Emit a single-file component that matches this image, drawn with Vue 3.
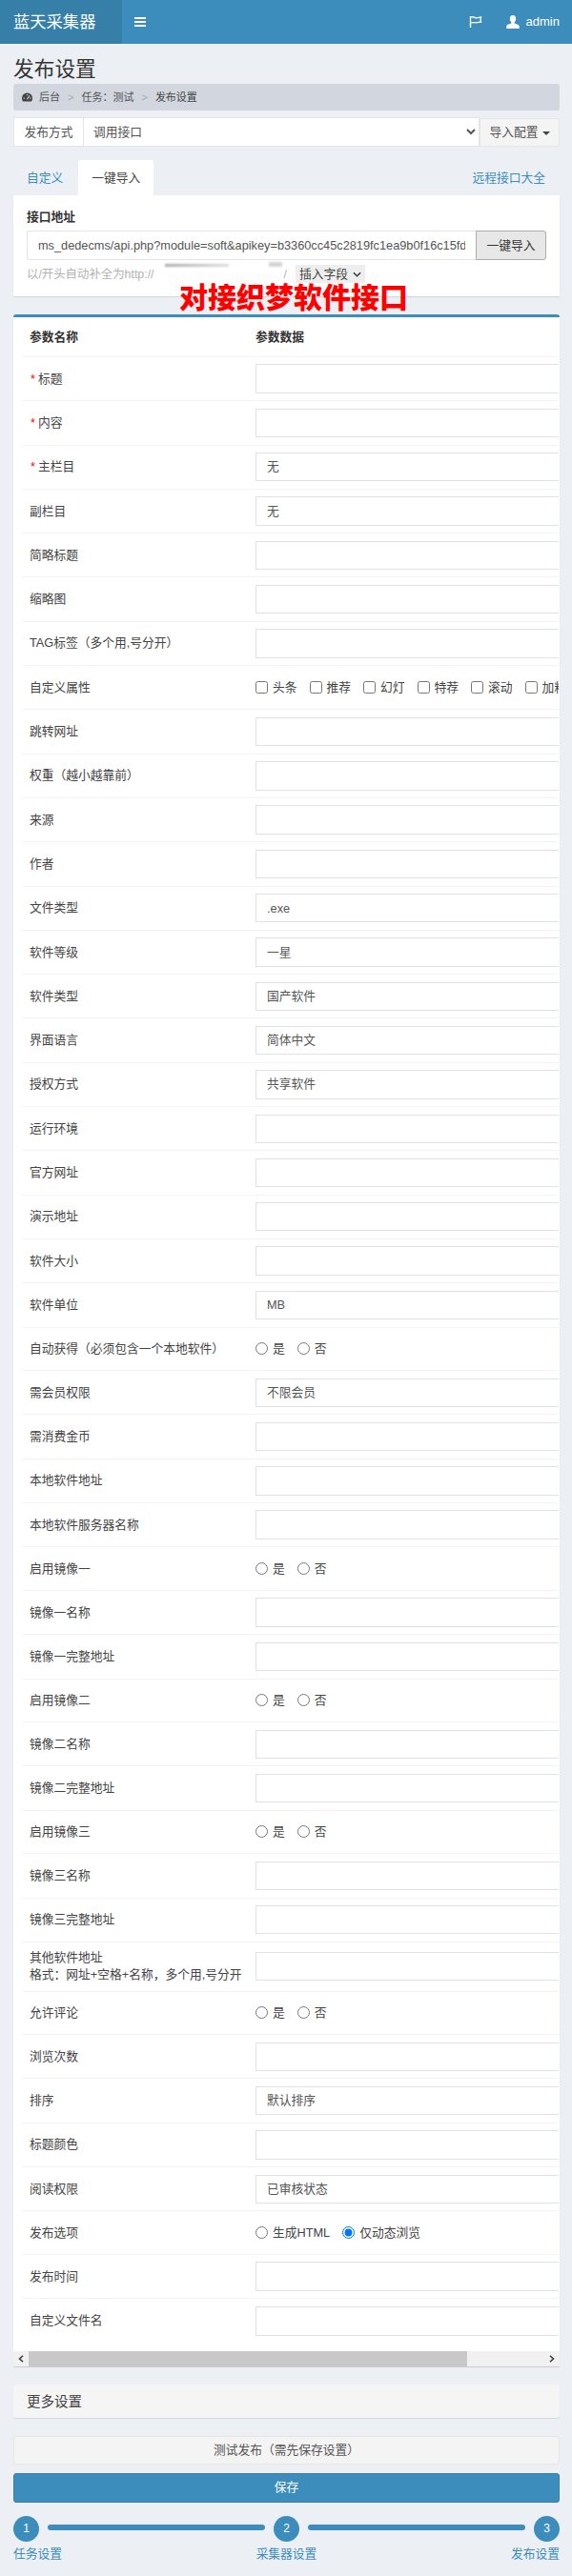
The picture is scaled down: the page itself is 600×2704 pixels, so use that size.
<script setup>
import { ref } from 'vue';

const apiUrl = ref('ms_dedecms/api.php?module=soft&apikey=b3360cc45c2819fc1ea9b0f16c15fd');

const filas = [
  { nombre: '标题', tipo: 'input', requerido: true },
  { nombre: '内容', tipo: 'input', requerido: true },
  { nombre: '主栏目', tipo: 'select', valor: '无', requerido: true },
  { nombre: '副栏目', tipo: 'select', valor: '无' },
  { nombre: '简略标题', tipo: 'input' },
  { nombre: '缩略图', tipo: 'input' },
  { nombre: 'TAG标签（多个用,号分开）', tipo: 'input' },
  { nombre: '自定义属性', tipo: 'check' },
  { nombre: '跳转网址', tipo: 'input' },
  { nombre: '权重（越小越靠前）', tipo: 'input' },
  { nombre: '来源', tipo: 'input' },
  { nombre: '作者', tipo: 'input' },
  { nombre: '文件类型', tipo: 'input', valor: '.exe' },
  { nombre: '软件等级', tipo: 'select', valor: '一星' },
  { nombre: '软件类型', tipo: 'select', valor: '国产软件' },
  { nombre: '界面语言', tipo: 'select', valor: '简体中文' },
  { nombre: '授权方式', tipo: 'select', valor: '共享软件' },
  { nombre: '运行环境', tipo: 'input' },
  { nombre: '官方网址', tipo: 'input' },
  { nombre: '演示地址', tipo: 'input' },
  { nombre: '软件大小', tipo: 'input' },
  { nombre: '软件单位', tipo: 'select', valor: 'MB' },
  { nombre: '自动获得（必须包含一个本地软件）', tipo: 'radio' },
  { nombre: '需会员权限', tipo: 'select', valor: '不限会员' },
  { nombre: '需消费金币', tipo: 'input' },
  { nombre: '本地软件地址', tipo: 'input' },
  { nombre: '本地软件服务器名称', tipo: 'input' },
  { nombre: '启用镜像一', tipo: 'radio' },
  { nombre: '镜像一名称', tipo: 'input' },
  { nombre: '镜像一完整地址', tipo: 'input' },
  { nombre: '启用镜像二', tipo: 'radio' },
  { nombre: '镜像二名称', tipo: 'input' },
  { nombre: '镜像二完整地址', tipo: 'input' },
  { nombre: '启用镜像三', tipo: 'radio' },
  { nombre: '镜像三名称', tipo: 'input' },
  { nombre: '镜像三完整地址', tipo: 'input' },
  { nombre: '其他软件地址', nota: '格式：网址+空格+名称，多个用,号分开', tipo: 'input', doble: true },
  { nombre: '允许评论', tipo: 'radio' },
  { nombre: '浏览次数', tipo: 'input' },
  { nombre: '排序', tipo: 'select', valor: '默认排序' },
  { nombre: '标题颜色', tipo: 'input' },
  { nombre: '阅读权限', tipo: 'select', valor: '已审核状态' },
  { nombre: '发布选项', tipo: 'radio', opciones: ['生成HTML', '仅动态浏览'], marcado: 1 },
  { nombre: '发布时间', tipo: 'input' },
  { nombre: '自定义文件名', tipo: 'input' },
];

const atributos = ['头条', '推荐', '幻灯', '特荐', '滚动', '加粗'];
</script>

<template>
  <div class="page">
    <header class="navbar">
      <div class="logo">蓝天采集器</div>
      <svg class="menu-icon" viewBox="0 0 12 10" width="12" height="10">
        <path d="M0 0h12v2H0zM0 4h12v2H0zM0 8h12v2H0z" fill="#fff" />
      </svg>
      <div class="nav-right">
        <svg class="flag-icon" viewBox="0 0 14 14" width="14" height="14">
          <path d="M1.5 1v12" stroke="#fff" stroke-width="1.4" fill="none" />
          <path d="M2 2c3-1 4 1 6 .8 2 0 3-.8 4.5-.8-.8 1.5-.8 3 0 5-2 0-3 .8-5 .8S4 7 2 8" stroke="#fff" stroke-width="1.3" fill="none" />
        </svg>
        <span class="user">
          <svg viewBox="0 0 14 14" width="14" height="14">
            <path d="M7 0c2 0 3.2 1.5 3.2 3.6 0 1.6-.7 3-1.500 3.700v1.200c1.800.6 5 1.400 5 3.200V14H.3v-2.300c0-1.800 3.200-2.600 5-3.200V7.300C4.500 6.600 3.800 5.200 3.800 3.600 3.800 1.500 5 0 7 0z" fill="#fff" />
          </svg>
          admin
        </span>
      </div>
    </header>

    <main class="content">
      <h1 class="title">发布设置</h1>

      <nav class="crumbs">
        <svg viewBox="0 0 12 10" width="11" height="10">
          <path d="M6 0a6 6 0 0 0-6 6c0 1.5.5 3 1.300 4h9.400C11.500 9 12 7.500 12 6a6 6 0 0 0-6-6z" fill="#444" />
          <path d="M6 7.500 8.500 3" stroke="#d2d6de" stroke-width="1.2" />
          <circle cx="2.5" cy="6" r=".8" fill="#d2d6de" />
          <circle cx="6" cy="2.4" r=".8" fill="#d2d6de" />
          <circle cx="9.6" cy="6" r=".8" fill="#d2d6de" />
        </svg>
        <span class="crumb-first">后台</span>
        <span class="sep">&gt;</span>
        <span>任务：测试</span>
        <span class="sep">&gt;</span>
        <span class="crumb-last">发布设置</span>
      </nav>

      <div class="method">
        <span class="method-addon">发布方式</span>
        <select class="method-select"><option>调用接口</option></select>
        <button class="method-btn" type="button">导入配置<i class="caret"></i></button>
      </div>

      <div class="tabs">
        <a class="tab">自定义</a>
        <a class="tab active">一键导入</a>
        <a class="tab tab-right">远程接口大全</a>
      </div>

      <section class="api-card">
        <label class="api-label">接口地址</label>
        <div class="api-group">
          <input v-model="apiUrl" class="api-input" type="text" />
          <button class="api-btn" type="button">一键导入</button>
        </div>
        <div class="help">
          <span class="help-text">以/开头自动补全为http://</span>
          <span class="help-hidden"></span>
          <span class="help-text">/</span>
          <i class="smudge smudge-a"></i>
          <i class="smudge smudge-b"></i>
          <button class="insert-btn" type="button">
            插入字段
            <svg viewBox="0 0 10 6" width="9" height="6">
              <path d="M1 1l4 4 4-4" stroke="#333" stroke-width="1.5" fill="none" />
            </svg>
          </button>
        </div>
        <div class="red-note">对接织梦软件接口</div>
      </section>

      <section class="table-card">
        <div class="table-clip">
          <div class="table-inner">
            <div class="row row-head">
              <div class="cell-name">参数名称</div>
              <div class="cell-data">参数数据</div>
            </div>
            <div
              v-for="fila in filas"
              :key="fila.nombre"
              :class="['row', { 'row-radio': fila.tipo === 'radio', 'row-double': fila.doble }]"
            >
              <div class="cell-name">
                <span v-if="fila.requerido" class="star">*</span>{{ fila.nombre }}
                <template v-if="fila.nota"><br />{{ fila.nota }}</template>
              </div>
              <div class="cell-data">
                <input v-if="fila.tipo === 'input'" class="control" type="text" :value="fila.valor" />
                <select v-else-if="fila.tipo === 'select'" class="control">
                  <option>{{ fila.valor }}</option>
                </select>
                <div v-else-if="fila.tipo === 'check'" class="options options-check">
                  <label v-for="a in atributos" :key="a" class="opt">
                    <input type="checkbox" />{{ a }}
                  </label>
                </div>
                <div v-else class="options">
                  <label v-for="(o, i) in fila.opciones || ['是', '否']" :key="o" class="opt">
                    <input type="radio" :name="fila.nombre" :checked="fila.marcado === i" />{{ o }}
                  </label>
                </div>
              </div>
            </div>
          </div>
        </div>
        <div class="scrollbar">
          <span class="scroll-arrow">
            <svg viewBox="0 0 6 8" width="6" height="8"><path d="M5 .8 1.5 4 5 7.2" stroke="#444" stroke-width="1.6" fill="none" /></svg>
          </span>
          <span class="scroll-thumb"></span>
          <span class="scroll-track"></span>
          <span class="scroll-arrow">
            <svg viewBox="0 0 6 8" width="6" height="8"><path d="M1 .8 4.5 4 1 7.2" stroke="#444" stroke-width="1.6" fill="none" /></svg>
          </span>
        </div>
      </section>

      <div class="more">更多设置</div>

      <button class="btn-test" type="button">测试发布（需先保存设置）</button>
      <button class="btn-save" type="button">保存</button>

      <div class="steps">
        <span class="step-dot">1</span>
        <span class="step-line"></span>
        <span class="step-dot">2</span>
        <span class="step-line"></span>
        <span class="step-dot">3</span>
      </div>
      <div class="step-labels">
        <a>任务设置</a>
        <a>采集器设置</a>
        <a>发布设置</a>
      </div>
    </main>
  </div>
</template>

<style>
html, body {
  margin: 0;
  background: #ecf0f5;
}
</style>

<style scoped>
.page {
  min-height: 2704px;
  background: #ecf0f5;
  font-family: "Liberation Sans", "Noto Sans CJK SC", sans-serif;
  font-size: 12.75px;
  line-height: 18px;
  color: #444;
}

.navbar {
  display: flex;
  align-items: center;
  height: 46px;
  background: #3c8dbc;
  color: #fff;
}

.logo {
  width: 128px;
  height: 46px;
  padding-left: 14px;
  box-sizing: border-box;
  background: #367fa9;
  font-size: 17.3px;
  line-height: 46px;
}

.menu-icon {
  margin-left: 13px;
}

.nav-right {
  display: flex;
  align-items: center;
  margin-left: auto;
  padding-right: 13px;
}

.flag-icon {
  margin-right: 25px;
}

.user {
  display: flex;
  align-items: center;
  gap: 7px;
  font-size: 13px;
}

.content {
  padding: 15px 13px 0 14px;
  position: relative;
}

.title {
  margin: 0 0 3px;
  font-size: 21.7px;
  line-height: 24px;
  font-weight: 400;
  color: #333;
}

.crumbs {
  display: flex;
  align-items: center;
  height: 28px;
  padding-left: 9px;
  border-radius: 3px;
  background: #d2d6de;
  font-size: 11px;
  color: #555;
}

.crumb-first {
  margin-left: 7px;
}

.sep {
  margin: 0 8px;
  color: #aaa;
}

.crumb-last {
  color: #444;
}

.method {
  display: flex;
  height: 31px;
  margin-top: 7px;
}

.method-addon {
  width: 74px;
  box-sizing: border-box;
  border: 1px solid #e1e4ea;
  background: #fff;
  text-align: center;
  line-height: 29px;
  color: #555;
}

.method-select {
  width: 415px;
  box-sizing: border-box;
  border: 1px solid #e1e4ea;
  border-left: 0;
  padding: 0 6px;
  background: #fff;
  font: inherit;
  color: #555;
  outline: none;
}

.method-btn {
  flex: 1;
  box-sizing: border-box;
  margin: 1px 0 0;
  border: 1px solid #e6e6e6;
  border-radius: 0 3px 3px 0;
  background: #f4f4f4;
  font: inherit;
  color: #555;
}

.caret {
  display: inline-block;
  margin-left: 4px;
  vertical-align: middle;
  border-top: 4px solid #444;
  border-left: 4px solid transparent;
  border-right: 4px solid transparent;
}

.tabs {
  display: flex;
  height: 37px;
  margin-top: 14px;
  box-sizing: border-box;
}

.tab {
  padding: 0 14px;
  line-height: 37px;
  color: #3c8dbc;
}

.tab.active {
  margin-left: 2px;
  border-radius: 3px 3px 0 0;
  background: #fff;
  color: #444;
}

.tab-right {
  margin-left: auto;
  padding-right: 15px;
}

.api-card {
  position: relative;
  padding: 14px;
  background: #fff;
  box-shadow: 0 1px 1px rgba(0, 0, 0, 0.1);
}

.api-label {
  display: block;
  font-weight: 700;
  color: #333;
}

.api-group {
  display: flex;
  height: 31px;
  margin-top: 5px;
}

.api-input {
  flex: 1;
  min-width: 0;
  box-sizing: border-box;
  border: 1px solid #e1e4ea;
  border-right: 0;
  border-radius: 3px 0 0 3px;
  padding: 0 11px;
  font: inherit;
  color: #555;
  outline: none;
}

.api-btn {
  width: 74px;
  border: 1px solid #adadad;
  border-radius: 0 3px 3px 0;
  background: #e7e7e7;
  font: inherit;
  color: #333;
}

.help {
  position: relative;
  display: flex;
  align-items: center;
  height: 19px;
  margin-top: 5px;
  color: #b2b2b2;
}

.help-text {
  font-size: 12.4px;
}

.help-hidden {
  width: 136px;
}

.smudge {
  position: absolute;
  filter: blur(1px);
}

.smudge-a {
  left: 145px;
  top: -1px;
  width: 67px;
  height: 3px;
  background: linear-gradient(90deg, #aaa, #ddd);
}

.smudge-b {
  left: 254px;
  top: -3px;
  width: 14px;
  height: 5px;
  background: #d4d4d4;
}

.insert-btn {
  display: flex;
  align-items: center;
  gap: 5px;
  height: 19px;
  margin-left: 9px;
  padding: 0 4px;
  border: 0;
  background: #eee;
  font: inherit;
  color: #444;
}

.red-note {
  position: absolute;
  left: 174px;
  top: 91px;
  font-size: 30px;
  line-height: 34px;
  font-weight: 900;
  color: #f00;
  white-space: nowrap;
}

.table-card {
  margin-top: 19px;
  border-top: 3px solid #3c8dbc;
  border-radius: 3px 3px 0 0;
  background: #fff;
  box-shadow: 0 1px 1px rgba(0, 0, 0, 0.15);
}

.table-clip {
  overflow: hidden;
  margin-right: 1px;
}

.table-inner {
  width: 640px;
  margin-left: 9px;
  padding-bottom: 8px;
}

.row {
  display: flex;
  align-items: center;
  height: 46.3px;
  box-sizing: border-box;
  border-bottom: 1px solid #f4f4f4;
}

.row-head {
  height: 42px;
  font-weight: 700;
  color: #333;
}

.row-radio {
  height: 45.6px;
}

.row-double {
  height: 51.7px;
}

.row:last-child {
  border-bottom: 0;
}

.cell-name {
  flex: none;
  width: 245px;
  padding-left: 8px;
  box-sizing: border-box;
}

.cell-data {
  flex: 1;
}

.star {
  margin: 0 3px 0 1px;
  color: #f00;
}

.control {
  display: block;
  width: 100%;
  height: 30.4px;
  box-sizing: border-box;
  border: 1px solid #dfe1e9;
  padding: 0 11px;
  appearance: none;
  background: #fff;
  font: inherit;
  color: #555;
  outline: none;
}

.options {
  display: flex;
  gap: 13px;
}

.options-check {
  white-space: nowrap;
}

.opt {
  display: flex;
  align-items: center;
  gap: 5px;
}

.opt input {
  margin: 0;
}

.scrollbar {
  display: flex;
  height: 16px;
  background: #f1f1f1;
}

.scroll-arrow {
  display: flex;
  align-items: center;
  justify-content: center;
  width: 16px;
}

.scroll-thumb {
  width: 460px;
  background: #c8c8c8;
}

.scroll-track {
  flex: 1;
}

.more {
  height: 35px;
  margin-top: 19px;
  padding-left: 14px;
  border-radius: 2px;
  background: #f5f5f5;
  box-shadow: 0 1px 1px rgba(0, 0, 0, 0.1);
  font-size: 14.5px;
  line-height: 36px;
  color: #444;
}

.btn-test,
.btn-save {
  display: block;
  width: 100%;
  font: inherit;
  border-radius: 3px;
}

.btn-test {
  height: 30px;
  margin-top: 19px;
  border: 1px solid #e6e6e6;
  background: #f4f4f4;
  color: #555;
}

.btn-save {
  height: 31px;
  margin-top: 9px;
  border: 1px solid #367fa9;
  background: #3c8dbc;
  color: #fff;
}

.steps {
  display: flex;
  margin-top: 14px;
}

.step-dot {
  flex: none;
  width: 27px;
  height: 27px;
  border-radius: 50%;
  background: #3c8dbc;
  color: #fff;
  text-align: center;
  line-height: 27px;
  font-size: 12px;
}

.step-line {
  flex: 1;
  height: 6px;
  margin: 9px 9px 0;
  border-radius: 3px;
  background: #3c8dbc;
}

.step-labels {
  display: grid;
  grid-template-columns: 1fr auto 1fr;
  margin-top: 4px;
  color: #3c8dbc;
}

.step-labels a:last-child {
  justify-self: end;
}
</style>
